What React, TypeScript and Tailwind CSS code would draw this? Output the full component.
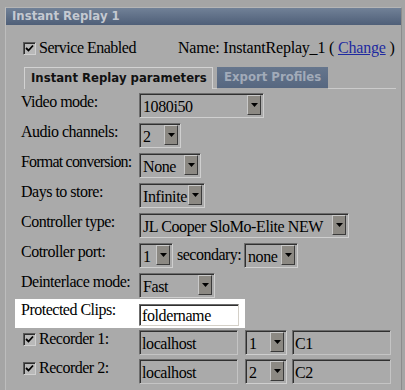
import React from "react";

const verdana = "font-['DejaVu_Sans']";

function Check() {
  return (
    <span className="inline-flex h-[13px] w-[13px] shrink-0 items-center justify-center border border-t-[#5a5a5a] border-l-[#5a5a5a] border-r-[#d0d0d0] border-b-[#d0d0d0] bg-[#b9b9b9] shadow-[inset_1px_1px_0_#2e2e2e]">
      <svg width="9" height="9" viewBox="0 0 9 9">
        <path d="M1 4 L3.5 6.5 L8 1.5" fill="none" stroke="#000" strokeWidth="1.8" />
      </svg>
    </span>
  );
}

function Select({ value, w }: { value: string; w: string }) {
  return (
    <div
      className={`flex h-[25px] ${w} shrink-0 items-stretch border border-t-[#6c6c6c] border-l-[#6c6c6c] border-r-[#cfcfcf] border-b-[#cfcfcf] bg-[#aaaaaa] p-[1px] shadow-[inset_1px_1px_0_#303030]`}
    >
      <span className="flex-1 overflow-hidden whitespace-nowrap pl-[2px] pt-[2px] text-[16px] leading-[19px] tracking-[-0.4px] text-black">
        {value}
      </span>
      <span className="mb-[1px] mr-[1px] flex w-[14px] shrink-0 items-center justify-center border border-t-[#c9c9c9] border-l-[#c9c9c9] border-r-[#3a3a3a] border-b-[#3a3a3a] bg-[#8c8983]">
        <svg width="7" height="4" viewBox="0 0 7 4">
          <path d="M0 0 H7 L3.5 4 Z" fill="#000" />
        </svg>
      </span>
    </div>
  );
}

function Input({ value, w, white }: { value: string; w: string; white?: boolean }) {
  return (
    <div
      className={`flex ${white ? "h-[22px]" : "h-[25px]"} ${w} shrink-0 items-center border border-t-[#6c6c6c] border-l-[#6c6c6c] ${
        white ? "border-r-[#d4d0c8] border-b-[#d4d0c8] bg-white" : "border-r-[#c4c4c4] border-b-[#c4c4c4] bg-[#aaaaaa]"
      } shadow-[inset_1px_1px_0_#303030] pl-[2px] pt-[1px] text-[16px] leading-[19px] tracking-[-0.4px] text-black`}
    >
      {value}
    </div>
  );
}

function Row({ label, children }: { label: React.ReactNode; children: React.ReactNode }) {
  return (
    <div className="flex h-[25px] items-start">
      <div className="w-[118px] shrink-0 whitespace-nowrap text-[16px] leading-[18px] tracking-[-0.5px] text-black">
        {label}
      </div>
      <div className="flex items-start">{children}</div>
    </div>
  );
}

export default function App() {
  return (
    <div className="h-[390px] w-[405px] overflow-hidden bg-[#a5a5a5] pl-[5px] pt-[7px] font-['Liberation_Serif']">
      <div className="h-[400px] w-[397px] border-l border-t border-l-[#bdbdbd] border-t-[#b5b5b5] border-r border-r-[#8c8c8c] bg-[#aaaaaa]">
        <div
          className={`h-[17px] bg-gradient-to-b from-[#718197] to-[#4f5f78] pl-[6px] text-[11.7px] font-bold leading-[17px] text-[#c4c9d1] ${verdana}`}
        >
          Instant Replay 1
        </div>

        <div className="flex items-center whitespace-nowrap pl-[17px] pt-[14px] text-[16px] leading-[18px] text-black">
          <Check />
          <span className="ml-[3px] tracking-[-0.5px]">Service Enabled</span>
          <span className="ml-[42px] tracking-[-0.2px]">
            Name: InstantReplay_1 ({" "}
            <a href="#" className="text-[#1e2aa0] underline">
              Change
            </a>{" "}
            )
          </span>
        </div>

        <div className={`mt-[10px] flex h-[22px] items-end pl-[18px] pr-[5px] text-[11.7px] font-bold ${verdana}`}>
          <div className="flex h-[22px] w-[189px] items-center whitespace-nowrap border border-b-0 border-[#d2d2d2] bg-[#aaaaaa] pl-[6px] text-[#111]">
            Instant Replay parameters
          </div>
          <div className="h-full w-[4px] border-b border-[#cbcbcb]" />
          <div className="flex h-[21px] w-[111px] items-center self-start whitespace-nowrap bg-gradient-to-b from-[#66768d] to-[#566780] pl-[7px] text-[#a2abb9]">
            Export Profiles
          </div>
          <div className="h-full flex-1 border-b border-[#cbcbcb]" />
        </div>

        <div className="flex flex-col gap-[5px] pl-[15px] pt-[4px]">
          <Row label="Video mode:">
            <Select value="1080i50" w="w-[125px]" />
          </Row>
          <Row label="Audio channels:">
            <Select value="2" w="w-[42px]" />
          </Row>
          <Row label={<span className="tracking-[-0.8px]">Format conversion:</span>}>
            <Select value="None" w="w-[62px]" />
          </Row>
          <Row label="Days to store:">
            <Select value="Infinite" w="w-[66px]" />
          </Row>
          <Row label="Controller type:">
            <Select value="JL Cooper SloMo-Elite NEW" w="w-[210px]" />
          </Row>
          <Row label="Cotroller port:">
            <Select value="1" w="w-[34px]" />
            <span className="ml-[4px] w-[67px] whitespace-nowrap pt-[3px] text-[16px] leading-[18px] tracking-[-0.5px]">
              secondary:
            </span>
            <Select value="none" w="w-[54px]" />
          </Row>
          <Row label="Deinterlace mode:">
            <Select value="Fast" w="w-[76px]" />
          </Row>
        </div>

        <div className="ml-[9px] mt-[1px] flex h-[29px] w-[230px] items-start bg-white pl-[6px] pt-[5px]">
          <div className="-mt-[3px] w-[118px] shrink-0 whitespace-nowrap text-[16px] leading-[18px] tracking-[-0.5px] text-black">
            Protected Clips:
          </div>
          <Input value="foldername" w="w-[100px]" white />
        </div>

        <div className="flex flex-col gap-[4px] pl-[15px] pt-[2px]">
          {[
            ["Recorder 1:", "1", "C1"],
            ["Recorder 2:", "2", "C2"],
          ].map(([label, n, c]) => (
            <Row
              key={label}
              label={
                <span className="flex items-center pl-[2px]">
                  <Check />
                  <span className="ml-[3px]">{label}</span>
                </span>
              }
            >
              <Input value="localhost" w="w-[99px]" />
              <div className="ml-[7px]">
                <Select value={n} w="w-[42px]" />
              </div>
              <div className="ml-[5px]">
                <Input value={c} w="w-[99px]" />
              </div>
            </Row>
          ))}
        </div>
      </div>
    </div>
  );
}
